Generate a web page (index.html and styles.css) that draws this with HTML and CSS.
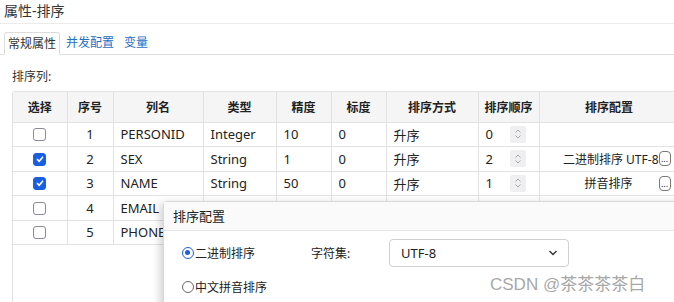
FILE: index.html
```html
<!DOCTYPE html>
<html lang="zh-CN">
<head>
    <meta charset="UTF-8">
    <title>属性-排序</title>
    <link rel="stylesheet" href="styles.css">
</head>
<body>
    <div class="page">
        <div class="title-bar">属性-排序</div>
        <div class="tabs">
            <div class="tab active">常规属性</div>
            <div class="tab">并发配置</div>
            <div class="tab">变量</div>
        </div>
        <div class="section-label">排序列:</div>
        <div class="table-wrap">
            <table class="sort-table">
                <colgroup>
                    <col style="width:54px">
                    <col style="width:46px">
                    <col style="width:90px">
                    <col style="width:73px">
                    <col style="width:55px">
                    <col style="width:55px">
                    <col style="width:92px">
                    <col style="width:61px">
                    <col style="width:140px">
                </colgroup>
                <thead>
                    <tr>
                        <th>选择</th>
                        <th>序号</th>
                        <th>列名</th>
                        <th>类型</th>
                        <th>精度</th>
                        <th>标度</th>
                        <th>排序方式</th>
                        <th>排序顺序</th>
                        <th>排序配置</th>
                    </tr>
                </thead>
                <tbody id="rows"></tbody>
            </table>
        </div>

        <div class="dialog">
            <div class="dialog-title">排序配置</div>
            <div class="dialog-body">
                <div class="dialog-row">
                    <label class="radio checked"><span class="dot"></span>二进制排序</label>
                    <span class="field-label">字符集:</span>
                    <div class="select">
                        <span>UTF-8</span>
                        <svg width="10" height="6" viewBox="0 0 10 6"><path d="M1.5 1 L5 4.5 L8.5 1" fill="none" stroke="#333" stroke-width="1.4"/></svg>
                    </div>
                </div>
                <div class="dialog-row">
                    <label class="radio"><span class="dot"></span>中文拼音排序</label>
                </div>
            </div>
        </div>

        <div class="watermark">CSDN @茶茶茶茶白</div>
    </div>

    <script>
        // rows 4 and 5 are mostly covered by the dialog, only the first cells show
        const columns = [
            { checked: false, no: 1, name: 'PERSONID', type: 'Integer', precision: 10, scale: 0, order: 0, config: '' },
            { checked: true, no: 2, name: 'SEX', type: 'String', precision: 1, scale: 0, order: 2, config: '二进制排序 UTF-8', right: true },
            { checked: true, no: 3, name: 'NAME', type: 'String', precision: 50, scale: 0, order: 1, config: '拼音排序' },
            { checked: false, no: 4, name: 'EMAIL', hidden: true },
            { checked: false, no: 5, name: 'PHONE', hidden: true }
        ];

        const spinner = '<span class="spin"><svg width="8" height="12" viewBox="0 0 8 12"><path d="M1.5 4.5 L4 2 L6.5 4.5 M1.5 7.5 L4 10 L6.5 7.5" fill="none" stroke="#a0a0a0" stroke-width="0.9"/></svg></span>';
        const check = '<svg width="10" height="10" viewBox="0 0 10 10"><path d="M2 5.2 L4.2 7.3 L8 2.8" fill="none" stroke="#fff" stroke-width="1.6"/></svg>';

        const tbody = document.getElementById('rows');
        columns.forEach(col => {
            const tr = document.createElement('tr');
            let config = '';
            if (col.config) {
                config = `<div class="config ${col.right ? 'right' : ''}"><span class="config-text">${col.config}</span><span class="more">...</span></div>`;
            }
            const first = `
                <td class="center"><span class="box ${col.checked ? 'on' : ''}">${col.checked ? check : ''}</span></td>
                <td class="center">${col.no}</td>
                <td>${col.name}</td>`;
            if (col.hidden) {
                tr.innerHTML = first + '<td></td><td></td><td></td><td></td><td></td><td></td>';
            } else {
                tr.innerHTML = first + `
                <td>${col.type}</td>
                <td>${col.precision}</td>
                <td>${col.scale}</td>
                <td>升序</td>
                <td><div class="order"><span>${col.order}</span>${spinner}</div></td>
                <td class="config-cell">${config}</td>`;
            }
            tbody.appendChild(tr);
        });
    </script>
</body>
</html>
```

FILE: styles.css
```css
* {
    margin: 0;
    padding: 0;
    box-sizing: border-box;
}

body {
    font-family: "Noto Sans", "Noto Sans CJK SC", sans-serif;
    color: #222;
    background: #fff;
    overflow: hidden;
}

.page {
    position: relative;
    width: 674px;
    height: 302px;
    overflow: hidden;
}

.title-bar {
    height: 24px;
    line-height: 22px;
    padding-left: 4px;
    font-size: 14px;
    color: #333;
    border-bottom: 1px solid #ebebeb;
}

.tabs {
    display: flex;
    margin-top: 8px;
    padding-left: 4px;
    height: 23px;
    border-bottom: 1px solid #dcdcdc;
}

.tab {
    font-size: 12px;
    line-height: 22px;
    padding: 0 5px;
    color: #1f6fc4;
}

.tab.active {
    color: #333;
    border: 1px solid #dcdcdc;
    border-bottom: 1px solid #fff;
    border-radius: 3px 3px 0 0;
    background: #fff;
    height: 23px;
    padding: 0 3px;
    margin-right: 1px;
}

.section-label {
    font-size: 12px;
    color: #333;
    padding-left: 12px;
    margin-top: 12px;
    height: 20px;
}

.table-wrap {
    margin-left: 12px;
    margin-top: 4px;
    width: 700px;
    height: 220px;
    border-left: 1px solid #e2e2e2;
    border-top: 1px solid #e2e2e2;
    border-radius: 3px 0 0 0;
}

.sort-table {
    border-collapse: collapse;
    table-layout: fixed;
    width: 666px;
    font-size: 13px;
}

.sort-table th {
    height: 30px;
    background: #f5f5f5;
    font-weight: bold;
    font-size: 12px;
    color: #222;
    border-right: 1px solid #e2e2e2;
    border-bottom: 1px solid #e2e2e2;
}

.sort-table td {
    height: 24.5px;
    padding: 0 7px;
    border-right: 1px solid #e2e2e2;
    border-bottom: 1px solid #e2e2e2;
    white-space: nowrap;
    color: #222;
}

.sort-table td.center {
    text-align: center;
    padding: 0;
}

.box {
    display: inline-block;
    width: 13px;
    height: 13px;
    border: 1.5px solid #8a8a95;
    border-radius: 3px;
    vertical-align: middle;
    position: relative;
    top: -1px;
}

.box.on {
    background: #1a5fe0;
    border-color: #1a5fe0;
}

.box svg {
    display: block;
    margin: 0 auto;
}

.order {
    display: flex;
    align-items: center;
    justify-content: space-between;
    padding-right: 6px;
}

.spin {
    display: flex;
    align-items: center;
    justify-content: center;
    width: 16px;
    height: 17px;
    background: #efeff2;
    border-radius: 2px;
}

.sort-table td.config-cell {
    padding: 0 8px 0 0;
    overflow: hidden;
}

.config {
    display: flex;
    align-items: center;
    justify-content: flex-end;
    font-size: 12px;
}

.config-text {
    margin-right: 26px;
}

.config.right .config-text {
    margin-right: 0;
}

.more {
    display: inline-block;
    width: 12px;
    height: 15px;
    border: 1px solid #777;
    border-radius: 4px;
    background: #fff;
    font-size: 9px;
    line-height: 14px;
    text-align: center;
}

.dialog {
    position: absolute;
    left: 163px;
    top: 201px;
    width: 540px;
    height: 120px;
    background: #fff;
    border: 1px solid #d8d8d8;
    border-radius: 4px 0 0 0;
    box-shadow: -3px 2px 8px rgba(0, 0, 0, 0.18);
}

.dialog-title {
    height: 29px;
    line-height: 28px;
    padding-left: 9px;
    font-size: 13px;
    color: #222;
    background: #fafafa;
    border-bottom: 1px solid #e6e6e6;
}

.dialog-body {
    padding: 8px 0 0 18px;
}

.dialog-row {
    display: flex;
    align-items: center;
    height: 28px;
    margin-bottom: 6px;
}

.radio {
    display: flex;
    align-items: center;
    font-size: 12px;
    color: #222;
    width: 129px;
}

.dot {
    width: 12px;
    height: 12px;
    border-radius: 50%;
    border: 1.3px solid #666;
    margin-right: 1px;
    position: relative;
}

.radio.checked .dot {
    border-color: #1a5fe0;
}

.radio.checked .dot::after {
    content: "";
    position: absolute;
    left: 2px;
    top: 2px;
    width: 5.4px;
    height: 5.4px;
    border-radius: 50%;
    background: #1a5fe0;
}

.field-label {
    font-size: 12px;
    width: 78px;
}

.select {
    display: flex;
    align-items: center;
    justify-content: space-between;
    width: 180px;
    height: 28px;
    border: 1px solid #d0d0d0;
    border-radius: 4px;
    padding: 0 10px 0 11px;
    font-size: 13px;
}

.watermark {
    position: absolute;
    left: 490px;
    top: 270px;
    font-size: 17px;
    color: rgba(150, 150, 150, 0.85);
    font-family: "Liberation Sans", "Noto Sans CJK SC", sans-serif;
}
```
